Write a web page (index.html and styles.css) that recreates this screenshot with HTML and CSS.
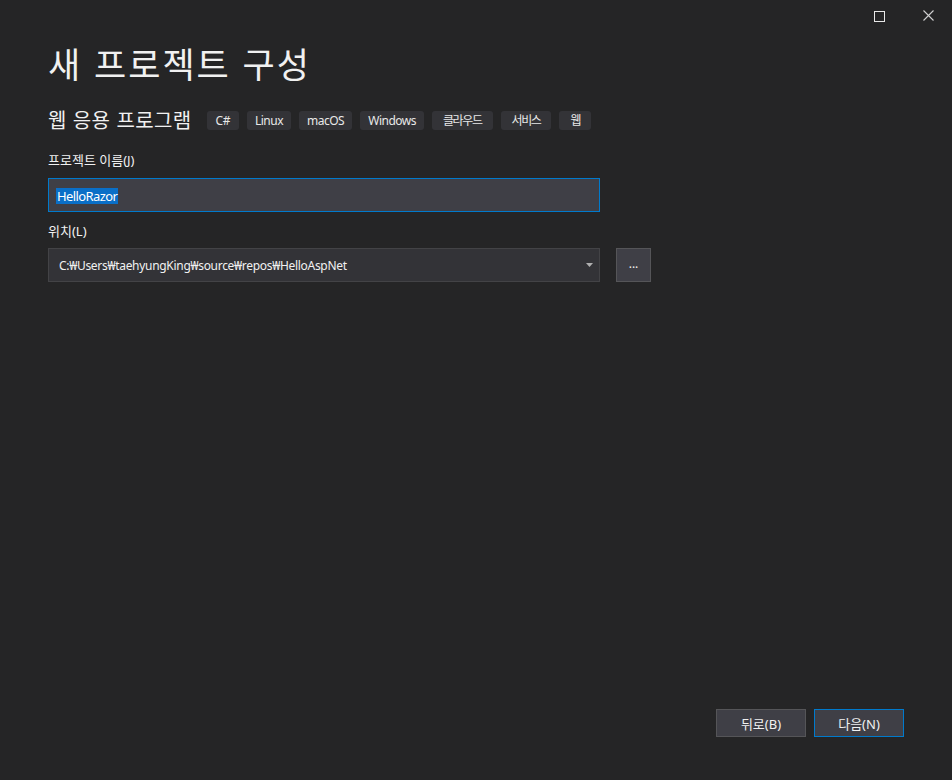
FILE: index.html
```html
<!DOCTYPE html>
<html lang="ko">
<head>
<meta charset="utf-8">
<link rel="stylesheet" href="styles.css">
</head>
<body>
<div class="window">
  <div class="titlebar">
    <span class="ctl-max"></span>
    <svg class="ctl-close" width="11" height="11" viewBox="0 0 11 11"><path d="M0.5 0.5 L10.5 10.5 M10.5 0.5 L0.5 10.5" stroke="#d0d0d0" stroke-width="1.1" fill="none"/></svg>
  </div>
  <main class="content">
    <h1 class="title">새 프로젝트 구성</h1>
    <div class="subtitle-row">
      <h2 class="subtitle">웹 응용 프로그램</h2>
      <ul class="tags">
        <li class="tag short">C#</li>
        <li class="tag">Linux</li>
        <li class="tag">macOS</li>
        <li class="tag">Windows</li>
        <li class="tag ko">클라우드</li>
        <li class="tag ko">서비스</li>
        <li class="tag ko">웹</li>
      </ul>
    </div>
    <label class="field-label">프로젝트 이름(J)</label>
    <div class="input focused"><span class="selected">HelloRazor</span></div>
    <label class="field-label second">위치(L)</label>
    <div class="location-row">
      <div class="select">
        <span class="select-text">C:₩Users₩taehyungKing₩source₩repos₩HelloAspNet</span>
        <svg class="arrow" width="7" height="4" viewBox="0 0 7 4"><path d="M0 0 H7 L3.5 4 Z" fill="#b0b0b0"/></svg>
      </div>
      <div class="browse">...</div>
    </div>
  </main>
  <footer class="footer">
    <button class="btn">뒤로(B)</button>
    <button class="btn primary">다음(N)</button>
  </footer>
</div>
</body>
</html>
```
FILE: styles.css
```css
* { box-sizing: border-box; }
html, body { margin: 0; padding: 0; }
body {
  background: #252526;
  color: #f1f1f1;
  font-family: "Segoe UI", "Noto Sans", "Noto Sans CJK KR", sans-serif;
  width: 952px;
  height: 780px;
  overflow: hidden;
}
.window {
  height: 780px;
  display: flex;
  flex-direction: column;
}
.titlebar {
  display: flex;
  justify-content: flex-end;
  align-items: flex-start;
  gap: 38px;
  padding: 10px 18px 0 0;
  height: 32px;
}
.ctl-max {
  width: 11px;
  height: 11px;
  border: 1.5px solid #e8e8e8;
  margin-top: 1px;
}
.ctl-close { display: block; }
.content {
  padding: 0 0 0 48px;
  flex: 1;
}
.title {
  margin: 9px 0 0 0;
  font-family: "Noto Sans CJK KR", sans-serif;
  font-weight: 400;
  font-size: 35px;
  line-height: 44px;
  letter-spacing: 2px;
  color: #f1f1f1;
}
.subtitle-row {
  display: flex;
  align-items: center;
  margin-top: 21px;
  gap: 15px;
}
.subtitle {
  margin: 0;
  font-family: "Noto Sans CJK KR", sans-serif;
  font-weight: 400;
  font-size: 20px;
  line-height: 28px;
  letter-spacing: 0.4px;
  color: #f1f1f1;
}
.tags {
  display: flex;
  gap: 8px;
  list-style: none;
  margin: 0;
  padding: 0;
}
.tag {
  background: #333337;
  border-radius: 3px;
  height: 19px;
  padding: 0 8px;
  font-size: 12px;
  line-height: 19px;
  letter-spacing: -0.5px;
  color: #e8e8e8;
  font-family: "Noto Sans", "Noto Sans CJK KR", sans-serif;
}
.tag.short { padding: 0 9px 0 9px; }
.tag.ko {
  letter-spacing: -1.4px;
  padding: 0 11px 0 11px;
}
.field-label {
  display: block;
  margin-top: 17px;
  font-size: 13px;
  line-height: 18px;
  color: #f1f1f1;
  font-family: "Noto Sans", "Noto Sans CJK KR", sans-serif;
}
.field-label.second { margin-top: 10px; }
.input {
  margin-top: 9px;
  width: 552px;
  height: 34px;
  background: #3f3f46;
  border: 1px solid #007acc;
  padding: 0 0 0 7px;
  display: flex;
  align-items: center;
}
.selected {
  background: #0a6fc7;
  color: #ffffff;
  font-size: 13px;
  line-height: 16px;
  letter-spacing: -0.6px;
  padding: 0 1px;
  margin-top: 1px;
  font-family: "Noto Sans", sans-serif;
}
.location-row {
  margin-top: 8px;
  display: flex;
  gap: 16px;
}
.select {
  width: 552px;
  height: 34px;
  background: #333337;
  border: 1px solid #434346;
  display: flex;
  align-items: center;
  padding: 0 6px 0 10px;
}
.select-text {
  flex: 1;
  font-size: 12px;
  letter-spacing: -0.3px;
  color: #f1f1f1;
  font-family: "Noto Sans", "Noto Sans CJK KR", sans-serif;
}
.arrow { display: block; }
.browse {
  width: 35px;
  height: 34px;
  background: #3f3f46;
  border: 1px solid #555558;
  color: #f1f1f1;
  font-size: 12px;
  display: flex;
  align-items: center;
  justify-content: center;
  padding-bottom: 3px;
  font-family: "Noto Sans", sans-serif;
}
.footer {
  display: flex;
  justify-content: flex-end;
  gap: 8px;
  padding: 0 48px 43px 0;
}
.btn {
  width: 90px;
  height: 28px;
  background: #3f3f46;
  border: 1px solid #555558;
  color: #f1f1f1;
  font-size: 13px;
  font-family: "Noto Sans", "Noto Sans CJK KR", sans-serif;
  padding: 0;
}
.btn.primary { border-color: #007acc; }
```
